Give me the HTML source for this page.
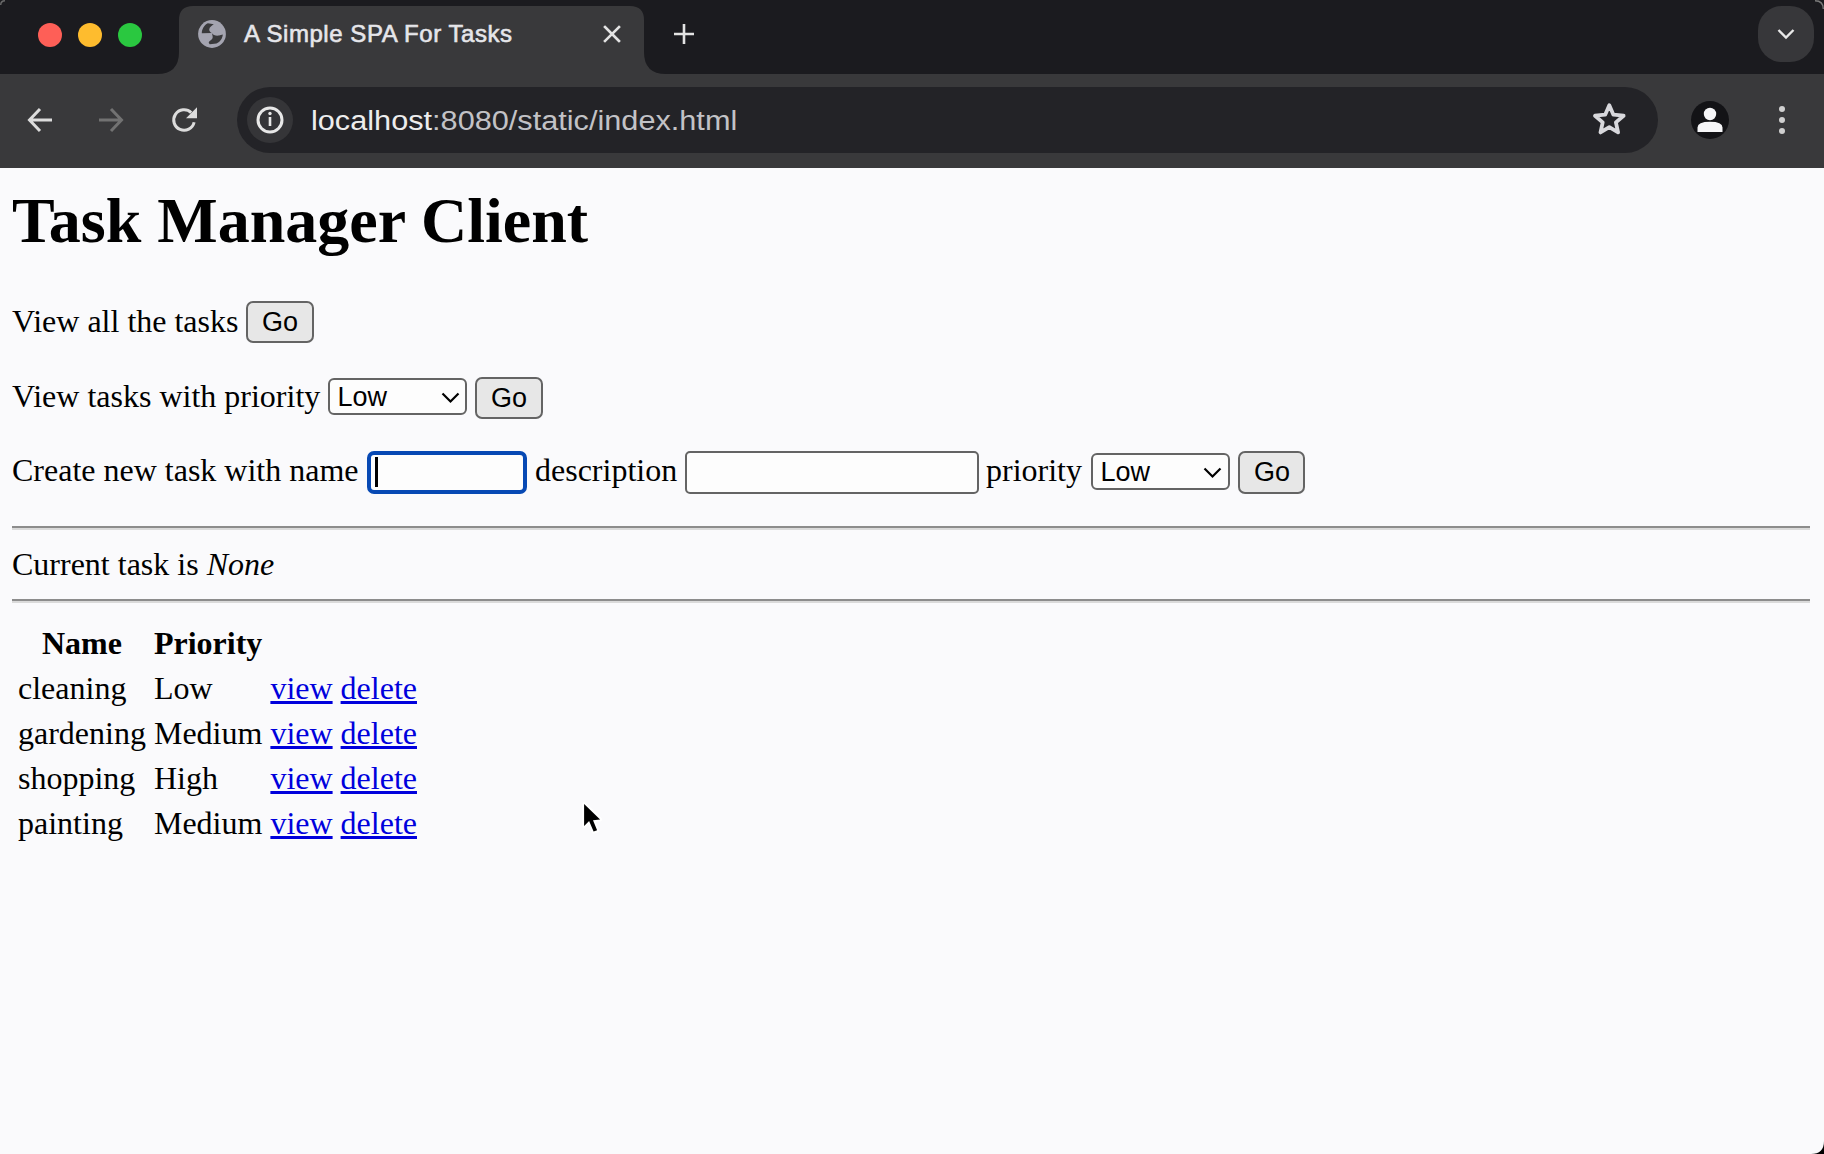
<!DOCTYPE html>
<html><head><meta charset="utf-8">
<style>
html,body{margin:0;padding:0;}
body{width:1824px;height:1154px;overflow:hidden;position:relative;background:#fafafc;font-family:"Liberation Serif",serif;color:#000;}
.a{position:absolute;white-space:nowrap;}
.s32{font-size:32px;line-height:36px;}
.sans{font-family:"Liberation Sans",sans-serif;}
#chrome{position:absolute;left:0;top:0;width:1824px;height:168px;background:#1b1b1f;}
#toolbar{position:absolute;left:0;top:74px;width:1824px;height:94px;background:#39393b;}
.btn{position:absolute;box-sizing:border-box;background:#e7e7e7;border:2px solid #646464;border-radius:7px;}
.btn span{position:absolute;font-family:"Liberation Sans",sans-serif;font-size:27px;line-height:30px;}
.sel{position:absolute;box-sizing:border-box;background:#fdfdfd;border:2px solid #646464;border-radius:6px;}
.sel span{position:absolute;font-family:"Liberation Sans",sans-serif;font-size:27px;line-height:30px;}
.inp{position:absolute;box-sizing:border-box;background:#fdfdfd;border:2px solid #646464;border-radius:5px;}
.hr{position:absolute;left:12px;width:1798px;height:4px;box-sizing:border-box;border-top:2px solid #8c8c8c;border-bottom:2px solid #dadada;}
table{position:absolute;left:12px;top:619px;border-spacing:4px;font-size:32px;line-height:37px;}
td,th{padding:2px;}
th{font-weight:bold;}
a{color:#0000dc;text-decoration:underline;}
</style></head><body>
<div id="chrome">
  <div id="toolbar"></div>
  <!-- active tab -->
  <svg class="a" style="left:0;top:0" width="1824" height="168">
    <path d="M157 74 Q179 74 179 52 L179 20 Q179 6 193 6 L630 6 Q644 6 644 20 L644 52 Q644 74 666 74 Z" fill="#39393b"/>
    <circle cx="50" cy="35" r="12" fill="#fe5f57"/>
    <circle cx="90" cy="35" r="12" fill="#febc2e"/>
    <circle cx="130" cy="35" r="12" fill="#2ac840"/>
    <!-- globe -->
    <circle cx="212" cy="34" r="13.9" fill="#a4a4b0"/>
    <path d="M201.8 33.3 C201.8 29.5 204 25.2 207.8 23.3 L213.8 24.2 C212 25.5 209.4 27 209.2 29.5 C209.1 31 210.4 32.3 211.8 33.1 Z" fill="#39393b"/>
    <path d="M211.8 33.1 C213 35.4 216 36 219 35.6 L222.8 34.6 C222.5 38.5 220.2 42 216.5 43.6 L209.8 44.2 C208.3 43.2 208.3 41.6 210.4 40.5 C212.4 39.5 213 37.6 212.6 36 Z" fill="#39393b"/>
    <!-- close x -->
    <path d="M605 27 L619 41 M619 27 L605 41" stroke="#e3e3e3" stroke-width="2.6" stroke-linecap="square"/>
    <!-- plus -->
    <path d="M684 24 L684 44 M674 34 L694 34" stroke="#e3e3e3" stroke-width="2.6"/>
    <path d="M1815 0.7 Q1823.3 0.7 1823.3 9" stroke="#7a7a7a" stroke-width="1.4" fill="none"/>
    <path d="M0.7 5 Q0.7 0.7 5 0.7" stroke="#6a6a6a" stroke-width="1.4" fill="none"/>
    <!-- dropdown btn -->
    <rect x="1758" y="6" width="56" height="56" rx="24" fill="#37373a"/>
    <path d="M1778.5 30 L1786 37.5 L1793.5 30" stroke="#e8e8e8" stroke-width="2.4" fill="none"/>
    <!-- omnibox -->
    <rect x="237" y="87" width="1421" height="66" rx="33" fill="#232327"/>
    <circle cx="270" cy="120" r="23" fill="#353538"/>
    <circle cx="270" cy="120" r="12" stroke="#e8e8e8" stroke-width="3" fill="none"/>
    <rect x="268.7" y="117" width="2.6" height="9" fill="#e8e8e8"/>
    <circle cx="270" cy="113.5" r="1.7" fill="#e8e8e8"/>
    <!-- back -->
    <path d="M52 120 L29.5 120 M40 109 L29.5 120 L40 131" stroke="#dcdcdc" stroke-width="3" fill="none"/>
    <!-- forward -->
    <path d="M99 120 L121.5 120 M111 109 L121.5 120 L111 131" stroke="#727272" stroke-width="3" fill="none"/>
    <!-- reload -->
    <path d="M191.2 112.6 A10.3 10.3 0 1 0 194.1 122.2" stroke="#dcdcdc" stroke-width="3" fill="none"/>
    <path d="M186 118.2 L197 118.2 L197 107.2 Z" fill="#dcdcdc"/>
    <!-- star -->
    <path d="M1609.3 105.3 L1613.4 114.7 L1623.6 115.7 L1615.9 122.4 L1618.1 132.4 L1609.3 127.2 L1600.5 132.4 L1602.7 122.4 L1595.0 115.7 L1605.2 114.7 Z" stroke="#d8d8dc" stroke-width="3.8" fill="none" stroke-linejoin="round"/>
    <!-- profile -->
    <circle cx="1710" cy="120" r="19" fill="#131316"/>
    <circle cx="1710" cy="114" r="6.2" fill="#f6f6f8"/>
    <path d="M1697.5 132 L1697.5 127.5 Q1697.5 121.8 1710 121.8 Q1722.5 121.8 1722.5 127.5 L1722.5 132 Z" fill="#f6f6f8"/>
    <!-- menu dots -->
    <circle cx="1782" cy="109" r="3" fill="#d0d0d0"/>
    <circle cx="1782" cy="120" r="3" fill="#d0d0d0"/>
    <circle cx="1782" cy="131" r="3" fill="#d0d0d0"/>
  </svg>
  <div class="a sans" style="left:244px;top:20px;font-size:24px;line-height:28px;color:#e6e6ea;letter-spacing:0.55px;-webkit-text-stroke:0.6px #e6e6ea;">A Simple SPA For Tasks</div>
  <div class="a sans" style="left:311px;top:105px;font-size:27px;line-height:32px;color:#ededed;transform:scaleX(1.136);transform-origin:0 0;">localhost<span style="color:#c2c2c6">:8080/static/index.html</span></div>
</div>

<div class="a" style="left:12px;top:185px;font-size:64px;line-height:72px;font-weight:bold;">Task Manager Client</div>

<div class="a s32" style="left:12px;top:303px;">View all the tasks</div>
<div class="btn" style="left:246px;top:301px;width:68px;height:42px;"><span style="left:14px;top:4px;">Go</span></div>

<div class="a s32" style="left:12px;top:378px;">View tasks with priority</div>
<div class="sel" style="left:328px;top:378px;width:139px;height:37px;"><span style="left:7.5px;top:1.5px;">Low</span>
  <svg style="position:absolute;left:111px;top:12px" width="20" height="12"><path d="M1.5 1.5 L9.5 9.5 L17.5 1.5" stroke="#000" stroke-width="2.2" fill="none"/></svg></div>
<div class="btn" style="left:475px;top:377px;width:68px;height:42px;"><span style="left:14px;top:4px;">Go</span></div>

<div class="a s32" style="left:12px;top:452px;">Create new task with name</div>
<div class="inp" style="left:367px;top:451px;width:160px;height:43px;border:4px solid #0749b4;border-radius:7px;">
  <div style="position:absolute;left:4px;top:2px;width:3px;height:30px;background:#000;"></div></div>
<div class="a s32" style="left:535px;top:452px;">description</div>
<div class="inp" style="left:685px;top:451px;width:294px;height:43px;"></div>
<div class="a s32" style="left:986px;top:452px;">priority</div>
<div class="sel" style="left:1091px;top:453px;width:139px;height:37px;"><span style="left:7.5px;top:1.5px;">Low</span>
  <svg style="position:absolute;left:110px;top:12px" width="20" height="12"><path d="M1.5 1.5 L9.5 9.5 L17.5 1.5" stroke="#000" stroke-width="2.2" fill="none"/></svg></div>
<div class="btn" style="left:1238px;top:451px;width:67px;height:43px;"><span style="left:14px;top:4px;">Go</span></div>

<div class="hr" style="top:526px;"></div>
<div class="a s32" style="left:12px;top:546px;">Current task is <i>None</i></div>
<div class="hr" style="top:599px;"></div>

<table>
<tr><th>Name</th><th>Priority</th><th></th></tr>
<tr><td>cleaning</td><td>Low</td><td><a>view</a> <a>delete</a></td></tr>
<tr><td>gardening</td><td>Medium</td><td><a>view</a> <a>delete</a></td></tr>
<tr><td>shopping</td><td>High</td><td><a>view</a> <a>delete</a></td></tr>
<tr><td>painting</td><td>Medium</td><td><a>view</a> <a>delete</a></td></tr>
</table>

<svg class="a" style="left:570px;top:795px" width="45" height="50">
  <path d="M14.1 8.9 L14.1 31 L19.1 26 L23.6 36.6 L27.1 35.3 L23 25.3 L30.1 24.5 Z" fill="#fff" stroke="#fff" stroke-width="4" stroke-linejoin="round"/>
  <path d="M14.1 8.9 L14.1 31 L19.1 26 L23.6 36.6 L27.1 35.3 L23 25.3 L30.1 24.5 Z" fill="#000"/>
</svg>
<svg class="a" style="left:1811px;top:1141px" width="13" height="13"><path d="M13 0 L13 13 L0 13 Q13 13 13 0 Z" fill="#000"/></svg>
</body></html>
